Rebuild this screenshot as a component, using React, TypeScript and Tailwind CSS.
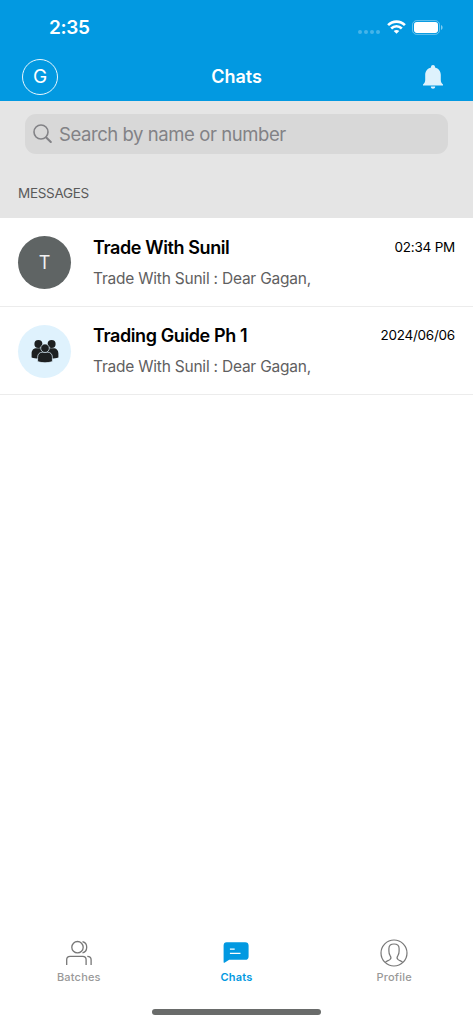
import React from 'react';

interface Chat {
  id: number;
  name: string;
  preview: string;
  time: string;
  group: boolean;
}

const chats: Chat[] = [
  { id: 1, name: 'Trade With Sunil', preview: 'Trade With Sunil : Dear Gagan,', time: '02:34 PM', group: false },
  { id: 2, name: 'Trading Guide Ph 1', preview: 'Trade With Sunil : Dear Gagan,', time: '2024/06/06', group: true }
];

const StatusIcons: React.FC = () => (
  <div className="flex items-center">
    <svg width="22" height="4" viewBox="0 0 22 4" fill="#fff" fillOpacity="0.27" className="mt-[10px]">
      <circle cx="2" cy="2" r="2" />
      <circle cx="8" cy="2" r="2" />
      <circle cx="14" cy="2" r="2" />
      <circle cx="20" cy="2" r="2" />
    </svg>
    <svg width="19" height="14" viewBox="0 0 19 14" fill="none" stroke="#fff" strokeWidth="2.6" className="ml-[7px]">
      <path d="M1.1 5.2C5.8.4 13.2.4 17.9 5.2" />
      <path d="M4.2 8.5c3-3 7.6-3 10.6 0" />
      <path d="M9.5 13.8 6.7 11c1.5-1.5 4.1-1.5 5.6 0z" fill="#fff" stroke="none" />
    </svg>
    <svg width="31" height="15" viewBox="0 0 31 15" className="ml-[6.5px]">
      <rect x="0.5" y="0.6" width="27" height="13.8" rx="4.2" fill="none" stroke="#fff" strokeOpacity="0.4" />
      <rect x="2" y="2.1" width="24" height="10.8" rx="2.8" fill="#fff" />
      <path d="M29 5v5c1-.4 1.6-1.4 1.6-2.5S30 5.4 29 5z" fill="#fff" fillOpacity="0.5" />
    </svg>
  </div>
);

const BellIcon: React.FC = () => (
  <svg width="22" height="26" viewBox="0 0 22 26" fill="#def2fc">
    <path d="M11 1c1.2 0 2 .8 2 2v.5c3.6.9 5.8 3.900 5.8 7.600v5c0 2 .7 3 2.200 4.400V21.500H1v-1c1.500-1.400 2.200-2.400 2.200-4.400v-5C3.200 7.400 5.400 4.400 9 3.500V3c0-1.200.8-2 2-2z" />
    <path d="M8.8 22.600h4.400c0 1.400-1 2.200-2.200 2.200s-2.200-.8-2.200-2.200z" />
  </svg>
);

const SearchIcon: React.FC = () => (
  <svg width="20" height="20" viewBox="0 0 20 20" fill="none" stroke="#828286">
    <circle cx="8" cy="8" r="7" strokeWidth="1.6" />
    <path d="m13.200 13.400 4.600 4.600" strokeWidth="2.100" strokeLinecap="round" />
  </svg>
);

const GroupIcon: React.FC = () => (
  <svg width="28" height="24" viewBox="0 0 28 24" fill="#1d2021">
    <circle cx="7.4" cy="4.9" r="4" />
    <circle cx="20.6" cy="4.9" r="4" />
    <path d="M.6 18.500v-4c0-3.400 2-5.300 5-5.300h3.800c3 0 5 2 5 5.300v4c-4 1.300-10 1.300-13.800 0z" />
    <path d="M13.600 18.500v-4c0-3.400 2-5.300 5-5.300h3.800c3 0 5 2 5 5.300v4c-4 1.300-10 1.300-13.800 0z" />
    <g stroke="#dff2fd" strokeWidth="0.7">
      <path d="M6.600 22.600v-4.300c0-3.300 2-5.100 5-5.100h4.800c3 0 5 1.800 5 5.100v4.300c-4.200 1.500-10.600 1.500-14.800 0z" />
      <circle cx="14" cy="9.200" r="4.300" />
    </g>
  </svg>
);

const BatchesIcon: React.FC = () => (
  <svg width="28" height="28" viewBox="0 0 28 28" fill="none" stroke="#777" strokeWidth="1.3">
    <circle cx="12.5" cy="8.2" r="5.7" />
    <path d="M17.5 2.600c5.600 1.300 5.600 9.900 0 11.200" />
    <path d="M1.700 26v-5.200c0-2.200 1.200-3.400 3.400-3.400h12.600c2.200 0 3.400 1.200 3.400 3.400V26" />
    <path d="M22.300 17.400c2.600 0 3.800 1.200 3.800 3.400V26" />
  </svg>
);

const ChatsIcon: React.FC = () => (
  <svg width="28" height="28" viewBox="0 0 28 28">
    <path d="M4.600 3.200h18.600c2.200 0 3.400 1.200 3.400 3.400v10.800c0 2.200-1.200 3.400-3.400 3.400H7.200l-4.300 2.800c-.8.500-1.300.2-1.300-.7V6.600c0-2.200 1-3.400 3-3.400z" fill="#0299e1" />
    <path d="M7.900 10.200h4.800M7.900 14.400h10.600" stroke="#fff" strokeWidth="1.200" />
  </svg>
);

const ProfileIcon: React.FC = () => (
  <svg width="28" height="28" viewBox="0 0 28 28" fill="none" stroke="#777" strokeWidth="1.2">
    <circle cx="14" cy="14" r="13" />
    <path d="M5.200 23.500c1.300-1.700 3.300-1.800 4.700-2.900 1.400-1.100 1.200-2.700.2-4-1-1.300-1.200-2.600-1.200-4.600V9.500C8.900 6.300 10.900 5 14 5s5.100 1.300 5.100 4.500V12c0 2-.2 3.300-1.200 4.600-1 1.300-1.200 2.900.2 4 1.400 1.100 3.400 1.200 4.700 2.900" />
  </svg>
);

const Header: React.FC = () => (
  <header className="h-[101px] bg-[#0299e1] text-white">
    <div className="flex h-[54px] items-center justify-between pl-[49px] pr-[30px]">
      <span className="text-[19px] font-semibold leading-none tracking-[-0.3px]">2:35</span>
      <StatusIcons />
    </div>
    <div className="grid h-[45px] grid-cols-3 items-center pl-[22px] pr-[29px]">
      <div className="flex h-9 w-9 items-center justify-center rounded-full border border-white/90 text-[19px] leading-none">G</div>
      <h1 className="ml-[7px] pt-px text-center text-[18px] font-semibold leading-none">Chats</h1>
      <button className="justify-self-end pt-px">
        <BellIcon />
      </button>
    </div>
  </header>
);

const ChatRow: React.FC<{ chat: Chat }> = ({ chat }) => (
  <li className="flex h-[88.4px] border-b border-[#ececec] px-[18px]">
    <div
      className={`mt-[18px] flex h-[53px] w-[53px] items-center justify-center rounded-full ${
        chat.group ? 'bg-[#dff2fd]' : 'bg-[#5f6464]'
      }`}
    >
      {chat.group ? <GroupIcon /> : <span className="pt-px text-[18px] leading-none text-[#f2f2f2]">T</span>}
    </div>
    <div className="ml-[22px] flex-1 pt-[18.4px]">
      <div className="flex items-center justify-between">
        <h2 className="text-[18px] font-semibold leading-[22px] tracking-[-0.4px] text-black">{chat.name}</h2>
        <span className="pb-[2px] text-[13.5px] leading-5 tracking-[-0.24px] text-black">{chat.time}</span>
      </div>
      <p className="mt-[10px] text-[15.5px] leading-5 tracking-[-0.22px] text-[#5f6061]">{chat.preview}</p>
    </div>
  </li>
);

const tabs = [
  { label: 'Batches', icon: <BatchesIcon />, active: false },
  { label: 'Chats', icon: <ChatsIcon />, active: true },
  { label: 'Profile', icon: <ProfileIcon />, active: false }
];

const App: React.FC = () => {
  return (
    <div className="flex h-[1024px] w-[473px] flex-col overflow-hidden bg-white font-['Inter',sans-serif]">
      <Header />

      {/* Search and section title */}
      <section className="h-[117.4px] bg-[#e5e5e5] pt-[13px]">
        <div className="mx-[25px] flex h-10 items-center rounded-[11px] bg-[#d8d8d8] pl-2">
          <SearchIcon />
          <span className="ml-[6px] pt-px text-[18.5px] leading-none tracking-[-0.43px] text-[#828286]">Search by name or number</span>
        </div>
        <p className="ml-[18px] mt-[31px] text-[13.5px] leading-4 tracking-[-0.3px] text-[#5a5a5a]">MESSAGES</p>
      </section>

      <ul className="flex-1">
        {chats.map(chat => (
          <ChatRow key={chat.id} chat={chat} />
        ))}
      </ul>

      {/* Bottom tabs */}
      <nav className="grid h-[70px] grid-cols-3">
        {tabs.map(tab => (
          <button key={tab.label} className="flex flex-col items-center">
            {tab.icon}
            <span
              className={`mt-[3px] text-[11px] leading-[14px] tracking-[0.2px] ${
                tab.active ? 'font-semibold text-[#0299e1]' : 'font-medium text-[#999]'
              }`}
            >
              {tab.label}
            </span>
          </button>
        ))}
      </nav>
      <div className="h-[15px]">
        <div className="mx-auto h-[5.5px] w-[169px] rounded-full bg-[#696b6a]" />
      </div>
    </div>
  );
};

export default App;
